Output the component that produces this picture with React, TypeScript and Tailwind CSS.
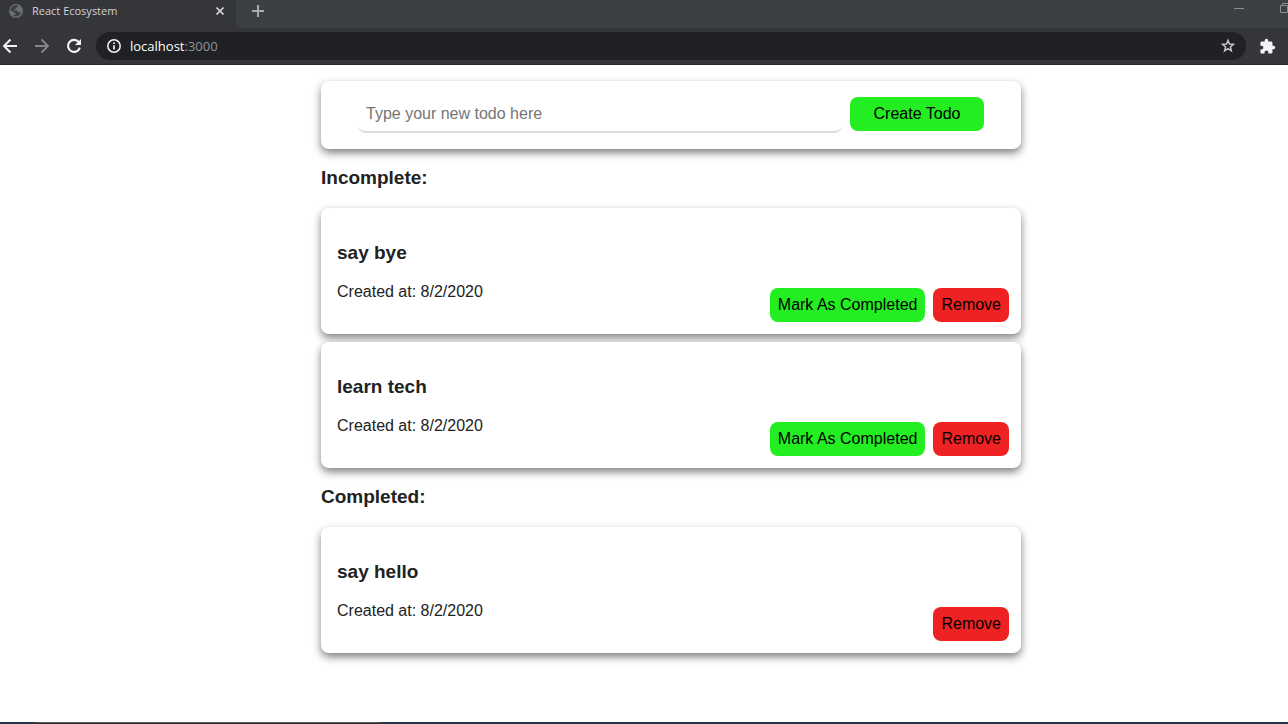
import { useState } from "react";
import type { FormEvent } from "react";
import { MdExtension } from "react-icons/md";

type Todo = { id: number; text: string; createdAt: string; completed: boolean };

const initialTodos: Todo[] = [
  { id: 1, text: "say bye", createdAt: "8/2/2020", completed: false },
  { id: 2, text: "learn tech", createdAt: "8/2/2020", completed: false },
  { id: 3, text: "say hello", createdAt: "8/2/2020", completed: true },
];

function GlobeIcon() {
  return (
    <svg width="14" height="14" viewBox="0 0 14 14" aria-hidden="true">
      <circle cx="7" cy="7" r="7" fill="#6b6e72" />
      <path
        d="M8.6 1.4L9 2.8L7.2 3.4L6.8 4.8L5.2 5.4L6 6.6L8.6 6.8L9.6 8.2L11 8.4L12.4 7.6C12 10.4 9.8 12.5 7 12.6C5.8 12.6 4.6 12.2 3.8 11.6L6.4 11L6.6 9.4L5 8.6L4.2 7.2L1.4 6.8C1.5 3.8 4 1.4 7 1.3Z"
        fill="#3d3f43"
      />
    </svg>
  );
}

function TabStrip() {
  return (
    <div className="flex h-7">
      <div className="flex h-[22px] w-[236px] items-center pl-[9px]">
        <GlobeIcon />
        <span className="ml-[9px] flex-1 font-['Open_Sans',sans-serif] text-[11px] leading-4 text-[#d2d4d7]">
          React Ecosystem
        </span>
        <button type="button" aria-label="Close tab" className="mr-3 text-[#d0d2d5]">
          <svg width="8" height="8" viewBox="0 0 8 8" stroke="currentColor" strokeWidth="1.6">
            <path d="M0.5 0.5 7.5 7.5M7.5 0.5 0.5 7.5" />
          </svg>
        </button>
      </div>
      <div className="flex flex-1 items-start justify-between overflow-hidden rounded-bl-lg bg-[#3c4043]">
        <button type="button" aria-label="New tab" className="flex h-[22px] w-11 items-center justify-center text-[#a9acaf]">
          <svg width="12" height="12" viewBox="0 0 12 12" stroke="currentColor" strokeWidth="2">
            <path d="M6 0V12M0 6H12" />
          </svg>
        </button>
        <div className="flex gap-9 pt-[3px] text-[#8b8e91]">
          <button type="button" aria-label="Minimize">
            <svg width="10" height="10" viewBox="0 0 10 10" stroke="currentColor">
              <path d="M0 5.5H10" />
            </svg>
          </button>
          <button type="button" aria-label="Restore" className="w-2 overflow-hidden">
            <svg width="10" height="10" viewBox="0 0 10 10" fill="none" stroke="currentColor">
              <path d="M0.5 2.5H7.5V9.5H0.5ZM2.5 2.5V0.5H9.5V7.5H7.5" />
            </svg>
          </button>
        </div>
      </div>
    </div>
  );
}

function Toolbar() {
  return (
    <div className="flex items-start border-b border-[#28292c] pt-1 pb-1 text-[#f1f3f4]">
      <div className="flex h-7 w-24 items-center gap-3">
        <button type="button" aria-label="Back">
          <svg width="20" height="20" viewBox="0 0 20 20" fill="none" stroke="currentColor" strokeWidth="2">
            <path d="M17 10H4.5M10.5 3.5L4 10L10.5 16.5" />
          </svg>
        </button>
        <button type="button" aria-label="Forward" className="text-[#85878a]">
          <svg width="20" height="20" viewBox="0 0 20 20" fill="none" stroke="currentColor" strokeWidth="1.8">
            <path d="M3 10H15.5M9.5 3.5L16 10L9.5 16.5" />
          </svg>
        </button>
        <button type="button" aria-label="Reload">
          <svg width="20" height="20" viewBox="0 0 20 20" fill="none" stroke="currentColor" strokeWidth="2.1">
            <path d="M14.8 6.2A6 6 0 1 0 15.8 11.6" />
            <path d="M17 3V9H11Z" fill="currentColor" stroke="none" />
          </svg>
        </button>
      </div>
      <div className="flex h-7 flex-1 items-center rounded-full bg-[#202124] px-[10px]">
        <svg width="16" height="16" viewBox="0 0 16 16" fill="none" stroke="currentColor" aria-hidden="true">
          <circle cx="8" cy="8" r="6.2" strokeWidth="1.5" />
          <path d="M8 7.2V11.6M8 4.4V6" strokeWidth="1.7" />
        </svg>
        <div
          role="textbox"
          aria-label="Address"
          contentEditable
          suppressContentEditableWarning
          className="ml-2 flex-1 font-['Open_Sans',sans-serif] text-[13px] leading-5 text-white outline-none"
        >
          localhost<span className="text-[#919497]">:3000</span>
        </div>
        <button type="button" aria-label="Bookmark" className="text-[#c3c5c8]">
          <svg width="16" height="16" viewBox="0 0 16 16" fill="none" stroke="currentColor" strokeWidth="1.5">
            <path d="M8 2.4L9.5 6L13.4 6.3L10.4 8.9L11.4 12.8L8 10.7L4.6 12.8L5.6 8.9L2.6 6.3L6.5 6Z" />
          </svg>
        </button>
      </div>
      <button type="button" aria-label="Extensions" className="flex h-7 w-[42px] items-center justify-center">
        <MdExtension size={17} />
      </button>
    </div>
  );
}

function TodoCard({
  todo,
  onComplete,
  onRemove,
}: {
  todo: Todo;
  onComplete: () => void;
  onRemove: () => void;
}) {
  return (
    <li className="flex items-end justify-between rounded-lg bg-white px-3 pt-[34px] pb-3 shadow-[0_4px_8px_grey]">
      <div className="flex flex-col gap-[18px] pb-5 pl-1">
        <h3 className="text-[19px] leading-[22px] font-bold">{todo.text}</h3>
        <p className="leading-5">Created at: {todo.createdAt}</p>
      </div>
      <div className="flex gap-2 text-black">
        {!todo.completed && (
          <button type="button" onClick={onComplete} className="h-[34px] rounded-lg bg-[#22ee22] px-2">
            Mark As Completed
          </button>
        )}
        <button type="button" onClick={onRemove} className="h-[34px] rounded-lg bg-[#ee2222] px-2">
          Remove
        </button>
      </div>
    </li>
  );
}

export default function App() {
  const [todos, setTodos] = useState(initialTodos);
  const [text, setText] = useState("");

  const create = (event: FormEvent) => {
    event.preventDefault();
    if (!text.trim()) return;
    const createdAt = new Date().toLocaleDateString("en-US");
    setTodos([...todos, { id: Date.now(), text, createdAt, completed: false }]);
    setText("");
  };

  const renderList = (completed: boolean) => (
    <ul className="flex flex-col gap-2">
      {todos
        .filter((todo) => todo.completed === completed)
        .map((todo) => (
          <TodoCard
            key={todo.id}
            todo={todo}
            onComplete={() =>
              setTodos(todos.map((item) => (item.id === todo.id ? { ...item, completed: true } : item)))
            }
            onRemove={() => setTodos(todos.filter((item) => item.id !== todo.id))}
          />
        ))}
    </ul>
  );

  return (
    <div className="flex min-h-screen flex-col bg-white font-['Liberation_Sans',Arial,sans-serif] text-base text-[#222222]">
      <header className="bg-[#35363a]">
        <TabStrip />
        <Toolbar />
      </header>
      <main className="flex-1 pt-4 pb-8 pl-[54px]">
        <div className="mx-auto max-w-[700px]">
          <form
            onSubmit={create}
            className="flex justify-center gap-2 rounded-lg bg-white p-4 shadow-[0_4px_8px_grey]"
          >
            <input
              aria-label="New todo"
              type="text"
              placeholder="Type your new todo here"
              value={text}
              onChange={(event) => setText(event.target.value)}
              className="h-9 w-[484px] min-w-0 rounded-lg border-b-2 border-[#dddddd] px-2 outline-none placeholder:text-[#757575]"
            />
            <button type="submit" className="h-[34px] w-[134px] rounded-lg bg-[#22ee22] text-black">
              Create Todo
            </button>
          </form>
          <h2 className="pt-[18px] pb-[19px] text-[19px] leading-[22px] font-bold">Incomplete:</h2>
          {renderList(false)}
          <h2 className="pt-[18px] pb-[19px] text-[19px] leading-[22px] font-bold">Completed:</h2>
          {renderList(true)}
        </div>
      </main>
      <footer className="flex h-0.5 bg-[#22394a] pl-9">
        <div className="w-[344px] border-t border-[#5a5a5a] bg-[#2c2c2c]" />
      </footer>
    </div>
  );
}
